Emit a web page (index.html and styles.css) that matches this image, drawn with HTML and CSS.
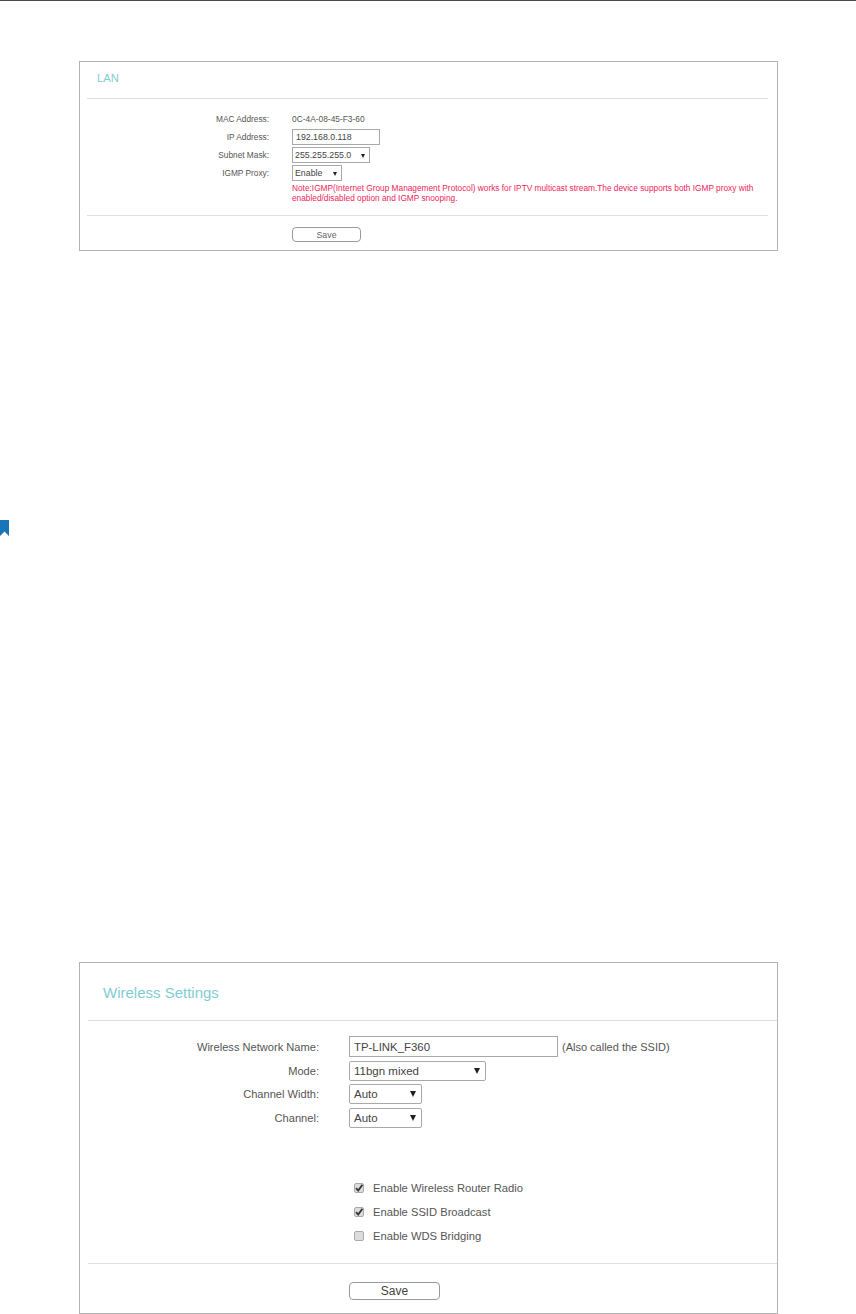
FILE: index.html
```html
<!DOCTYPE html>
<html lang="en">
<head>
<meta charset="utf-8">
<title>LAN and Wireless Settings</title>
<link rel="stylesheet" href="styles.css">
</head>
<body>
<div class="topbar"></div>
<svg class="bookmark" width="9" height="16" viewBox="0 0 9 16"><path d="M0 0H9V16L4.5 11.5L0 16Z" fill="#1a74b8"/></svg>

<section class="panel panel-lan">
  <h2 class="title">LAN</h2>
  <div class="rule"></div>
  <div class="form">
    <div class="row"><span class="label">MAC Address:</span><span class="value">0C-4A-08-45-F3-60</span></div>
    <div class="row"><span class="label">IP Address:</span><input class="field ip" value="192.168.0.118"></div>
    <div class="row"><span class="label">Subnet Mask:</span><span class="select mask"><select><option>255.255.255.0</option></select></span></div>
    <div class="row"><span class="label">IGMP Proxy:</span><span class="select igmp"><select><option>Enable</option></select></span></div>
    <p class="note">Note:IGMP(Internet Group Management Protocol) works for IPTV multicast stream.The device supports both IGMP proxy with enabled/disabled option and IGMP snooping.</p>
  </div>
  <div class="rule"></div>
  <div class="actions"><button class="save">Save</button></div>
</section>

<section class="panel panel-wireless">
  <h2 class="title">Wireless Settings</h2>
  <div class="rule"></div>
  <div class="form">
    <div class="row"><span class="label">Wireless Network Name:</span><input class="field ssid" value="TP-LINK_F360"><span class="hint">(Also called the SSID)</span></div>
    <div class="row"><span class="label">Mode:</span><span class="select mode"><select><option>11bgn mixed</option></select></span></div>
    <div class="row"><span class="label">Channel Width:</span><span class="select auto"><select><option>Auto</option></select></span></div>
    <div class="row"><span class="label">Channel:</span><span class="select auto"><select><option>Auto</option></select></span></div>
  </div>
  <div class="checks">
    <div class="check"><span class="box"><svg width="10" height="10" viewBox="0 0 10 10"><path d="M2 5.2L4.2 7.6L8.4 1.8" fill="none" stroke="#333" stroke-width="1.8"/></svg></span><span>Enable Wireless Router Radio</span></div>
    <div class="check"><span class="box"><svg width="10" height="10" viewBox="0 0 10 10"><path d="M2 5.2L4.2 7.6L8.4 1.8" fill="none" stroke="#333" stroke-width="1.8"/></svg></span><span>Enable SSID Broadcast</span></div>
    <div class="check"><span class="box"></span><span>Enable WDS Bridging</span></div>
  </div>
  <div class="rule"></div>
  <div class="actions"><button class="save">Save</button></div>
</section>
</body>
</html>
```
FILE: styles.css
```css
* { box-sizing: border-box; }
html, body { margin: 0; padding: 0; background: #fff; }
body {
  position: relative;
  width: 856px;
  height: 1314px;
  overflow: hidden;
  font-family: "Liberation Sans", Arial, sans-serif;
  color: #555;
}
.topbar { height: 1px; background: #4a4a50; }
.bookmark { position: absolute; left: 0; top: 520px; display: block; }

.panel {
  width: 699px;
  margin-left: 79px;
  border: 1px solid #b3b3b3;
}
.rule { height: 1px; background: #dedede; margin-left: 7px; margin-right: 9px; }
.title { margin: 0; font-weight: 400; color: #7fcdd2; }
.row { display: flex; align-items: center; }
.label { text-align: right; flex: none; }
.field, .select select, .save {
  font-family: "Liberation Sans", Arial, sans-serif;
  color: #444;
  margin: 0;
}
.field { border: 1px solid #a9a9a9; background: #fff; outline: none; border-radius: 0; }
.select { position: relative; display: block; flex: none; }
.select select {
  appearance: none;
  width: 100%;
  height: 100%;
  display: block;
  background: #fff;
  border: 1px solid #a9a9a9;
  border-radius: 0;
}
.select::after {
  content: "";
  position: absolute;
  top: 50%;
  border-style: solid;
  border-color: #222 transparent transparent;
  pointer-events: none;
}
.save {
  display: block;
  padding: 0;
  background: #fff;
  border: 1px solid #999;
  border-radius: 4px;
}

/* LAN panel */
.panel-lan { margin-top: 60px; height: 190px; }
.panel-lan .title { height: 36px; padding: 9px 0 0 17px; font-size: 11.2px; line-height: 14px; }
.panel-lan .form { padding-top: 11px; height: 116px; font-size: 8.3px; }
.panel-lan .row { height: 18px; }
.panel-lan .label { width: 189px; margin-right: 23px; }
.panel-lan .value { color: #555; font-size: 8.4px; }
.panel-lan .field { height: 16px; font-size: 8.8px; padding: 0 3px; }
.panel-lan .ip { width: 88px; }
.panel-lan .select { height: 16px; }
.panel-lan .select select { font-size: 8.8px; padding: 0 0 0 2px; }
.panel-lan .select::after { right: 5px; margin-top: -1px; border-width: 4px 2.5px 0; }
.panel-lan .mask { width: 78px; }
.panel-lan .igmp { width: 50px; }
.note {
  margin: 0 0 0 212px;
  padding-top: 1px;
  width: 470px;
  font-size: 8.3px;
  line-height: 10px;
  color: #f0245c;
}
.panel-lan .actions { padding: 11px 0 0 212px; }
.panel-lan .save { width: 69px; height: 15px; font-size: 8.8px; color: #666; }

/* Wireless panel */
.panel-wireless { margin-top: 711px; height: 352px; }
.panel-wireless .title { height: 57px; padding: 20px 0 0 23px; font-size: 15px; line-height: 19px; }
.panel-wireless .rule { margin-left: 8px; margin-right: 0; }
.panel-wireless .form { padding-top: 14px; height: 96px; box-sizing: content-box; font-size: 11.1px; }
.panel-wireless .row { height: 23.8px; }
.panel-wireless .label { width: 239px; margin-right: 30px; }
.panel-wireless .field { height: 21px; font-size: 11.4px; padding: 0 4px; }
.panel-wireless .ssid { width: 209px; }
.hint { margin-left: 4px; font-size: 11px; }
.panel-wireless .select { height: 20px; }
.panel-wireless .select select { font-size: 11.5px; padding: 0 0 0 4px; border-radius: 2px; }
.panel-wireless .select::after { right: 6px; margin-top: -3px; border-width: 6px 3px 0; }
.panel-wireless .mode { width: 137px; }
.panel-wireless .auto { width: 73px; }
.checks { padding: 45px 0 15px 274px; font-size: 11.2px; }
.check { display: flex; align-items: center; height: 24px; }
.box {
  width: 10px;
  height: 10px;
  margin-right: 9px;
  display: block;
  background: #dcdcdc;
  border: 1px solid #aaa;
  border-radius: 2px;
  flex: none;
}
.box svg { display: block; margin: -1px; }
.panel-wireless .actions { padding: 18px 0 0 269px; }
.panel-wireless .save { width: 91px; height: 18px; font-size: 12px; }
```
